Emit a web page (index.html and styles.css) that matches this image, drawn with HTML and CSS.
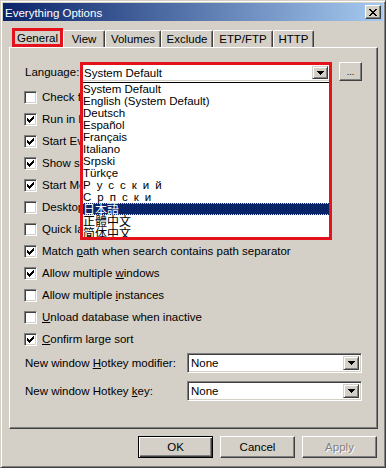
FILE: index.html
```html
<!DOCTYPE html>
<html lang="en">
<head>
  <meta charset="UTF-8" />
  <meta name="viewport" content="width=device-width, initial-scale=1" />
  <title>Everything Options</title>

  <link rel="stylesheet" href="styles.css">
</head>
<body>

  <div class="window">
    <div class="titlebar">
      <span class="title">Everything Options</span>
      <div class="close-btn">
        <svg width="8" height="7" viewBox="0 0 8 7" shape-rendering="crispEdges">
          <path d="M0 0h2v1h-2z M6 0h2v1h-2z M1 1h2v1h-2z M5 1h2v1h-2z M2 2h4v1h-4z M3 3h2v1h-2z M2 4h4v1h-4z M1 5h2v1h-2z M5 5h2v1h-2z M0 6h2v1h-2z M6 6h2v1h-2z" fill="#000"/>
        </svg>
      </div>
    </div>

    <div class="tabs">
      <div class="tab active">General</div>
      <div class="tab tab-view">View</div>
      <div class="tab tab-volumes">Volumes</div>
      <div class="tab tab-exclude">Exclude</div>
      <div class="tab tab-ftp">ETP/FTP</div>
      <div class="tab tab-http">HTTP</div>
    </div>

    <div class="panel">
      <div class="lang-row">
        <span class="lang-label">Language:</span>
        <div class="combo-wrap">
          <div class="combo lang-combo">
            <span class="combo-text">System Default</span>
            <span class="combo-arrow">
              <svg width="7" height="4" viewBox="0 0 7 4" shape-rendering="crispEdges"><path d="M0 0h7v1h-7z M1 1h5v1h-5z M2 2h3v1h-3z M3 3h1v1h-1z" fill="#000"/></svg>
            </span>
          </div>
          <ul class="lang-list">
            <li>System Default</li>
            <li>English (System Default)</li>
            <li>Deutsch</li>
            <li>Español</li>
            <li>Français</li>
            <li>Italiano</li>
            <li>Srpski</li>
            <li>Türkçe</li>
            <li class="spaced">Русский</li>
            <li class="spaced">Српски</li>
            <li class="cjk selected">日本語</li>
            <li class="cjk">正體中文</li>
            <li class="cjk">简体中文</li>
          </ul>
          <div class="mark"></div>
        </div>
        <div class="btn dots-btn">...</div>
      </div>

      <div class="checks">
        <div class="check-row"><span class="box"></span><span>Check for updates on startup</span></div>
        <div class="check-row"><span class="box checked"></span><span>Run in background</span></div>
        <div class="check-row"><span class="box checked"></span><span>Start Everything on system startup</span></div>
        <div class="check-row"><span class="box checked"></span><span>Show shell context menu</span></div>
        <div class="check-row"><span class="box checked"></span><span>Start Menu shortcuts</span></div>
        <div class="check-row"><span class="box"></span><span>Desktop shortcut</span></div>
        <div class="check-row"><span class="box"></span><span>Quick launch shortcut</span></div>
        <div class="check-row"><span class="box checked"></span><span>Match <u>p</u>ath when search contains path separator</span></div>
        <div class="check-row"><span class="box checked"></span><span>Allow multiple <u>w</u>indows</span></div>
        <div class="check-row"><span class="box"></span><span>Allow multiple <u>i</u>nstances</span></div>
        <div class="check-row"><span class="box"></span><span><u>U</u>nload database when inactive</span></div>
        <div class="check-row"><span class="box checked"></span><span><u>C</u>onfirm large sort</span></div>
      </div>

      <div class="hotkey-row">
        <span class="hotkey-label">New window <u>H</u>otkey modifier:</span>
        <div class="combo hotkey-combo">
          <span class="combo-text">None</span>
          <span class="combo-arrow">
            <svg width="7" height="4" viewBox="0 0 7 4" shape-rendering="crispEdges"><path d="M0 0h7v1h-7z M1 1h5v1h-5z M2 2h3v1h-3z M3 3h1v1h-1z" fill="#000"/></svg>
          </span>
        </div>
      </div>
      <div class="hotkey-row second">
        <span class="hotkey-label">New window Hotkey <u>k</u>ey:</span>
        <div class="combo hotkey-combo">
          <span class="combo-text">None</span>
          <span class="combo-arrow">
            <svg width="7" height="4" viewBox="0 0 7 4" shape-rendering="crispEdges"><path d="M0 0h7v1h-7z M1 1h5v1h-5z M2 2h3v1h-3z M3 3h1v1h-1z" fill="#000"/></svg>
          </span>
        </div>
      </div>
    </div>

    <div class="buttons">
      <div class="btn default">OK</div>
      <div class="btn">Cancel</div>
      <div class="btn disabled">Apply</div>
    </div>
  </div>

</body>
</html>
```

FILE: styles.css
```css
* {
  box-sizing: border-box;
}

body {
  margin: 0;
  background: #d4d0c8;
  font-family: "Liberation Sans", Arial, sans-serif;
  font-size: 11.5px;
  color: #000;
}

/* Window frame */
.window {
  width: 386px;
  height: 468px;
  padding: 2px;
  border: 1px solid;
  border-color: #d4d0c8 #404040 #404040 #d4d0c8;
  box-shadow: inset 1px 1px #fff, inset -1px -1px #808080;
  display: flex;
  flex-direction: column;
}

.titlebar {
  height: 18px;
  padding: 0 2px;
  background: linear-gradient(to right, #0a246a, #a6caf0);
  color: #fff;
  display: flex;
  align-items: center;
  justify-content: space-between;
}

.title {
  font-size: 11.5px;
  padding-top: 1px;
}

.close-btn {
  width: 16px;
  height: 14px;
  background: #d4d0c8;
  border: 1px solid;
  border-color: #fff #404040 #404040 #fff;
  box-shadow: inset -1px -1px #808080;
  display: flex;
  align-items: center;
  justify-content: center;
  padding-right: 1px;
}

/* Tabs */
.tabs {
  margin: 7px 0 0 9px;
  height: 19px;
  display: flex;
  align-items: flex-end;
}

.tab {
  height: 17px;
  padding-top: 2px;
  text-align: center;
  border-top: 1px solid #fff;
  border-left: 1px solid #fff;
  border-right: 1px solid #404040;
  box-shadow: inset -1px 0 #808080;
  border-radius: 2px 2px 0 0;
}

.tab.active {
  width: 51px;
  height: 19px;
  padding-top: 1px;
  border: 3px solid #e3121b;
  border-radius: 0;
  box-shadow: none;
}

.tab-view { width: 42px; }
.tab-volumes { width: 56px; }
.tab-exclude { width: 52px; }
.tab-ftp { width: 60px; }
.tab-http { width: 41px; }

/* Tab page */
.panel {
  height: 382px;
  margin: 0 5px 0 6px;
  padding: 15px 0 0 14px;
  border-top: 1px solid #fff;
  border-left: 1px solid #fff;
  border-right: 1px solid #404040;
  border-bottom: 1px solid #404040;
  box-shadow: inset -1px -1px #808080;
}

.lang-row {
  display: flex;
  align-items: flex-start;
}

.lang-label {
  width: 56px;
  padding-left: 1px;
  line-height: 19px;
}

.combo-wrap {
  position: relative;
}

.combo {
  background: #fff;
  border: 1px solid;
  border-color: #808080 #fff #fff #808080;
  box-shadow: inset 1px 1px #404040, inset -1px -1px #d4d0c8;
  display: flex;
  align-items: center;
  padding: 2px 2px 2px 3px;
}

.combo-text {
  flex: 1;
}

.combo-arrow {
  background: #d4d0c8;
  border: 1px solid;
  border-color: #d4d0c8 #404040 #404040 #d4d0c8;
  box-shadow: inset 1px 1px #fff, inset -1px -1px #808080;
  display: flex;
  align-items: center;
  justify-content: center;
  width: 16px;
  align-self: stretch;
}

.lang-combo {
  width: 251px;
  height: 19px;
}

/* Open language list */
.lang-list {
  position: absolute;
  top: 19px;
  left: 0;
  width: 251px;
  margin: 0;
  padding: 0;
  list-style: none;
  background: #fff;
  border: 1px solid #000;
  z-index: 2;
}

.lang-list li {
  height: 12px;
  line-height: 12px;
  padding-left: 2px;
  white-space: nowrap;
  overflow: hidden;
}

.lang-list .spaced {
  letter-spacing: 6px;
}

.lang-list .cjk {
  font-family: "Noto Sans CJK JP", "Liberation Sans", sans-serif;
  font-size: 12px;
}

.lang-list .selected {
  background: #0a246a;
  color: #fff;
  outline: 1px dotted #d4d0c8;
  outline-offset: -1px;
}

/* red highlight drawn over the screenshot */
.mark {
  position: absolute;
  left: 0;
  top: -1px;
  width: 252px;
  height: 178px;
  border: 3px solid #e3121b;
  z-index: 3;
  pointer-events: none;
}

/* Buttons */
.btn {
  background: #d4d0c8;
  border: 1px solid;
  border-color: #fff #404040 #404040 #fff;
  box-shadow: inset -1px -1px #808080;
  display: flex;
  align-items: center;
  justify-content: center;
  width: 75px;
  height: 22px;
}

.btn.default {
  border: 1px solid #000;
  box-shadow: inset 1px 1px #fff, inset -1px -1px #404040, inset -2px -2px #808080;
}

.btn.disabled {
  color: #808080;
  text-shadow: 1px 1px #fff;
}

.dots-btn {
  width: 23px;
  height: 19px;
  margin: -1px 0 0 8px;
  font-size: 9px;
}

/* Checkboxes */
.checks {
  margin-top: 4px;
}

.check-row {
  height: 22px;
  display: flex;
  align-items: center;
  white-space: nowrap;
}

.box {
  width: 13px;
  height: 13px;
  margin-right: 5px;
  flex-shrink: 0;
  background: #fff;
  border: 1px solid;
  border-color: #808080 #fff #fff #808080;
  box-shadow: inset 1px 1px #404040, inset -1px -1px #d4d0c8;
}

.box.checked {
  background: #fff url("data:image/svg+xml,%3Csvg xmlns='http://www.w3.org/2000/svg' width='7' height='7' shape-rendering='crispEdges'%3E%3Cpath d='M6 0h1v1h-1z M5 1h2v1h-2z M0 2h1v1h-1z M4 2h3v1h-3z M0 3h2v1h-2z M3 3h3v1h-3z M0 4h5v1h-5z M1 5h3v1h-3z M2 6h1v1h-1z'/%3E%3C/svg%3E") no-repeat 2px 2px;
}

/* Hotkey rows */
.hotkey-row {
  margin-top: 3px;
  display: flex;
  align-items: center;
}

.hotkey-row.second {
  margin-top: 8px;
}

.hotkey-label {
  width: 163px;
  padding-left: 1px;
}

.hotkey-combo {
  width: 175px;
  height: 20px;
}

/* Dialog buttons */
.buttons {
  margin-top: 7px;
  padding-right: 6px;
  display: flex;
  justify-content: flex-end;
  gap: 7px;
}
```
